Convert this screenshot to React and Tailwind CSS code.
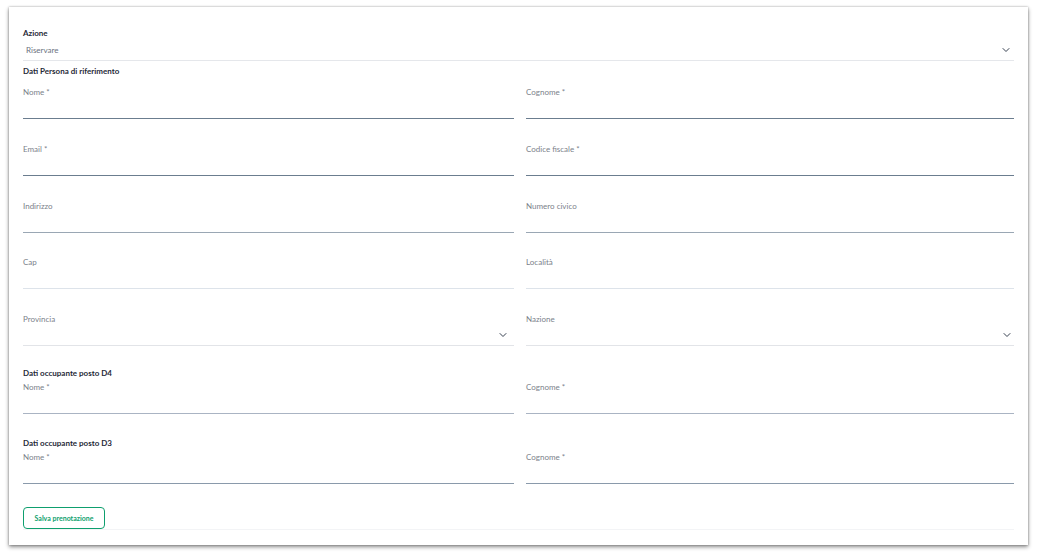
import { ChevronDown } from "lucide-react";

function Field({ label, line, select, chevronPad = "pr-[1px]" }) {
  return (
    <div>
      <div className="h-3 leading-3 text-[8px] text-[#7b818a]">{label}</div>
      <div className={`h-[21px] border-b flex items-end justify-end pb-[4px] ${chevronPad} ${line}`}>
        {select && <ChevronDown size={12} strokeWidth={2} className="text-[#374151]" />}
      </div>
    </div>
  );
}

function Heading({ children, className = "" }) {
  return (
    <div className={`h-3 leading-3 text-[8px] font-bold text-[#1f2937] ${className}`}>{children}</div>
  );
}

export default function App() {
  return (
    <div className="w-[1037px] h-[558px] bg-white pt-[7px] px-[9px]" style={{ fontFamily: "Lato, 'Open Sans', sans-serif" }}>
      <div className="bg-white h-[538px] px-[14px] pt-[20px] shadow-[0_2px_4px_rgba(0,0,0,0.45),0_0_2px_rgba(0,0,0,0.3)]">
        {/* Azione */}
        <div>
          <Heading>Azione</Heading>
          <div className="h-[22px] border-b border-[#e5e7eb] flex items-center justify-between pl-[3px] pr-[2px]">
            <span className="text-[8px] text-[#6b7280]">Riservare</span>
            <ChevronDown size={12} strokeWidth={2} className="text-[#374151]" />
          </div>
        </div>

        <Heading className="mt-[4px]">Dati Persona di riferimento</Heading>

        <div className="grid grid-cols-[491px_1fr] gap-x-[12px] gap-y-[23.75px] mt-[9px]">
          <Field label="Nome *" line="border-[#6b7d8f]" />
          <Field label="Cognome *" line="border-[#6b7d8f]" />
          <Field label="Email *" line="border-[#6b7d8f]" />
          <Field label="Codice fiscale *" line="border-[#6b7d8f]" />
          <Field label="Indirizzo" line="border-[#9aa7b4]" />
          <Field label="Numero civico" line="border-[#9aa7b4]" />
          <Field label="Cap" line="border-[#dde3ea]" />
          <Field label="Località" line="border-[#dde3ea]" />
          <Field label="Provincia" line="border-[#e2e4e8]" select chevronPad="pr-[5px]" />
          <Field label="Nazione" line="border-[#e2e4e8]" select />
        </div>

        <Heading className="mt-[21px]">Dati occupante posto D4</Heading>
        <div className="grid grid-cols-[491px_1fr] gap-x-[12px] mt-[2px]">
          <Field label="Nome *" line="border-[#aab4c3]" />
          <Field label="Cognome *" line="border-[#aab4c3]" />
        </div>

        <Heading className="mt-[23px]">Dati occupante posto D3</Heading>
        <div className="grid grid-cols-[491px_1fr] gap-x-[12px] mt-[2px]">
          <Field label="Nome *" line="border-[#8a9aab]" />
          <Field label="Cognome *" line="border-[#8a9aab]" />
        </div>

        <div className="mt-[19px] border-b border-[#f3f4f6]">
          <button className="w-[82px] h-[22px] border border-[#0e9f6e] rounded-[4px] text-[7px] font-bold text-[#0e9f6e] bg-white">
            Salva prenotazione
          </button>
        </div>
      </div>
    </div>
  );
}
